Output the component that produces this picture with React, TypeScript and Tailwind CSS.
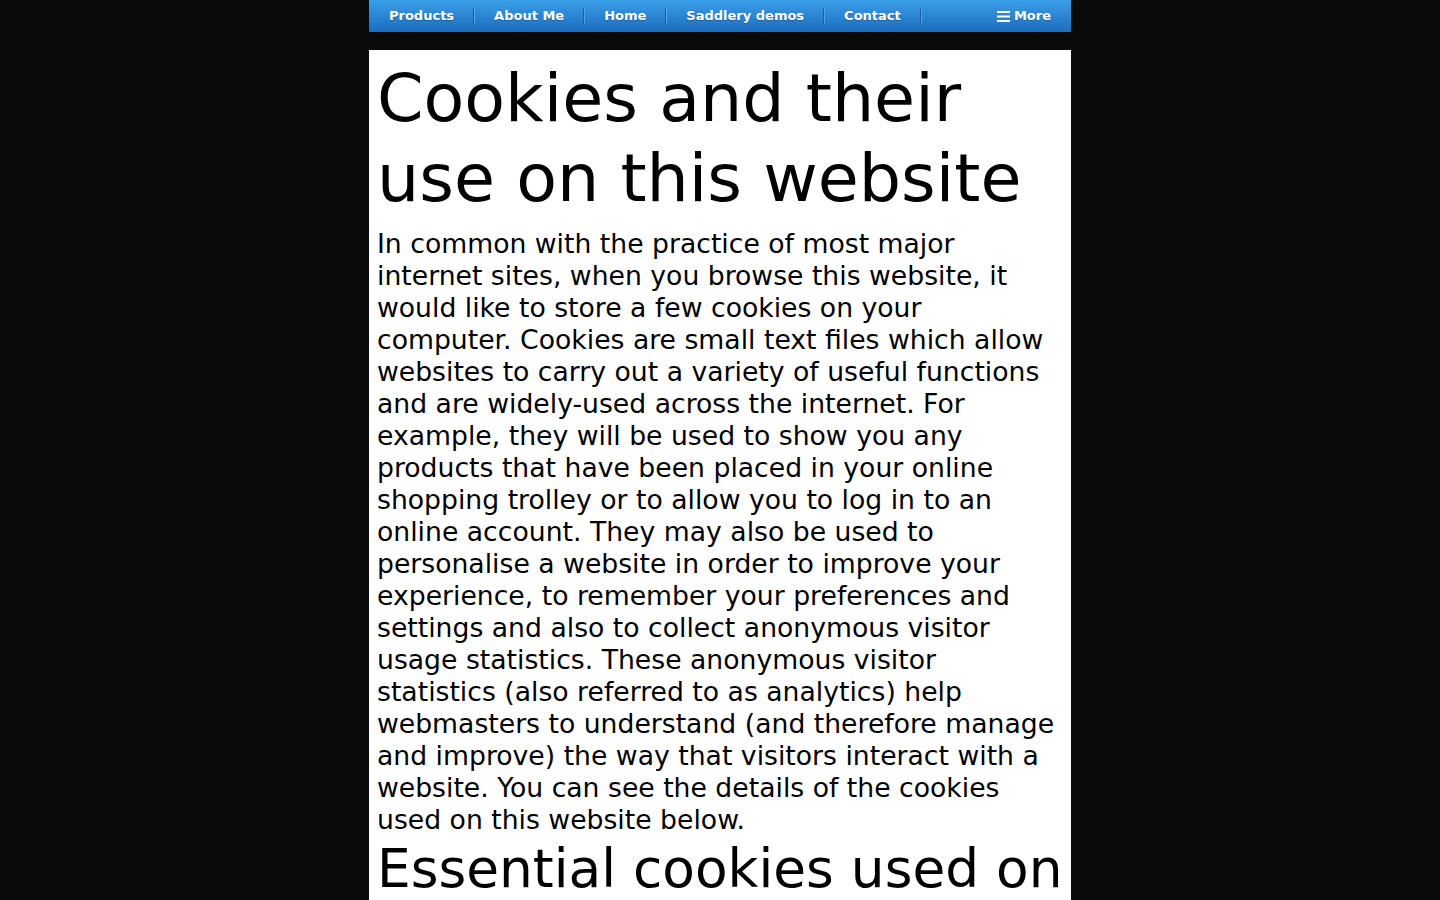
import React from "react";

const items = ["Products", "About Me", "Home", "Saddlery demos", "Contact"];

function Sep() {
  return <span className="w-px h-[16px] bg-[#1a5fa8] shadow-[1px_0_0_#4aa3ec]" />;
}

export default function App() {
  return (
    <div className="min-h-[900px] bg-[#0a0a0a]" style={{ fontFamily: '"DejaVu Sans", sans-serif' }}>
      <div className="w-[702px] mx-auto">
        <nav className="h-[32px] flex items-center bg-gradient-to-b from-[#3b9ee9] to-[#1b6dbd] text-white text-[13px] font-bold">
          {items.map((t) => (
            <React.Fragment key={t}>
              <span className="pl-[20px] pr-[19px] [text-shadow:0_1px_1px_rgba(0,0,0,0.25)]">{t}</span>
              <Sep />
            </React.Fragment>
          ))}
          <span className="ml-auto pr-[20px] flex items-center gap-[4px] [text-shadow:0_1px_1px_rgba(0,0,0,0.25)]">
            <svg width="13" height="11" viewBox="0 0 13 11" fill="white">
              <rect x="0" y="0" width="13" height="2" />
              <rect x="0" y="4.5" width="13" height="2" />
              <rect x="0" y="9" width="13" height="2" />
            </svg>
            More
          </span>
        </nav>
        <main className="mt-[18px] bg-white text-black px-[8px] pt-[8px] pb-[40px]">
          <h1 className="text-[66.67px] leading-[80px] font-normal">Cookies and their use on this website</h1>
          <p className="text-[26.67px] leading-[32px] mt-[10px]">
            In common with the practice of most major internet sites, when you browse this website, it would like to store a few cookies on your computer. Cookies are small text files which allow websites to carry out a variety of useful functions and are widely-used across the internet. For example, they will be used to show you any products that have been placed in your online shopping trolley or to allow you to log in to an online account. They may also be used to personalise a website in order to improve your experience, to remember your preferences and settings and also to collect anonymous visitor usage statistics. These anonymous visitor statistics (also referred to as analytics) help webmasters to understand (and therefore manage and improve) the way that visitors interact with a website. You can see the details of the cookies used on this website below.
          </p>
          <h2 className="text-[53.33px] leading-[66px] font-normal">Essential cookies used on this website</h2>
        </main>
      </div>
    </div>
  );
}
